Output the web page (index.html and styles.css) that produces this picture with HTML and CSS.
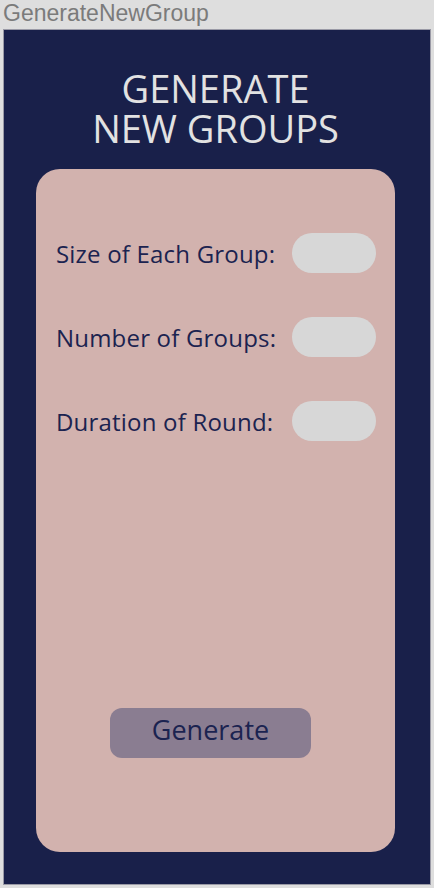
FILE: index.html
```html
<!DOCTYPE html>
<html>
<head>
<meta charset="utf-8">
<link rel="stylesheet" href="styles.css">
</head>
<body>
<div class="window-title">GenerateNewGroup</div>
<div class="screen">
  <h1 class="heading"><span class="heading-line">GENERATE</span><span class="heading-line">NEW GROUPS</span></h1>
  <div class="card">
    <div class="row">
      <span class="label">Size of Each Group:</span>
      <input class="field" type="text">
    </div>
    <div class="row">
      <span class="label">Number of Groups:</span>
      <input class="field" type="text">
    </div>
    <div class="row">
      <span class="label">Duration of Round:</span>
      <input class="field" type="text">
    </div>
    <div class="spacer"></div>
    <button class="generate">Generate</button>
  </div>
</div>
</body>
</html>
```
FILE: styles.css
```css
html, body {
  margin: 0;
  padding: 0;
}
body {
  background: #dedede;
  width: 434px;
  height: 888px;
  overflow: hidden;
}
.window-title {
  height: 29px;
  line-height: 27px;
  padding-left: 3px;
  font-family: "Liberation Sans", Arial, sans-serif;
  font-size: 23px;
  color: #7b7b7b;
}
.screen {
  box-sizing: border-box;
  margin: 0 3px;
  width: 428px;
  height: 856px;
  background: #19204a;
  border: 1px solid #9a9aa6;
  display: flex;
  flex-direction: column;
  padding: 0 35px 32px 32px;
}
.heading {
  margin: 38px 0 0;
  height: 101px;
  display: flex;
  flex-direction: column;
  align-items: center;
  font-family: "Open Sans", "DejaVu Sans", sans-serif;
  font-weight: 400;
  font-size: 38px;
  line-height: 40px;
  color: #e2e2e2;
}
.heading-line {
  display: block;
  height: 40px;
}
.card {
  flex: 1;
  background: #d2b2ae;
  border-radius: 24px;
  display: flex;
  flex-direction: column;
  gap: 44px;
  padding: 64px 19px 94px 20px;
}
.row {
  display: flex;
  align-items: center;
  justify-content: space-between;
  height: 40px;
}
.label {
  font-family: "Open Sans", "DejaVu Sans", sans-serif;
  font-size: 24px;
  letter-spacing: 0.2px;
  color: #1b2350;
}
.field {
  width: 84px;
  height: 40px;
  box-sizing: border-box;
  border: none;
  border-radius: 20px;
  background: #d7d7d7;
  outline: none;
}
.spacer {
  flex: 1;
  margin-top: -44px;
}
.generate {
  align-self: flex-start;
  margin-left: 54px;
  width: 201px;
  height: 50px;
  border: none;
  border-radius: 12px;
  background: #8a7d91;
  font-family: "Open Sans", "DejaVu Sans", sans-serif;
  font-size: 27px;
  color: #1b2350;
  padding: 0 0 8px;
}
```
